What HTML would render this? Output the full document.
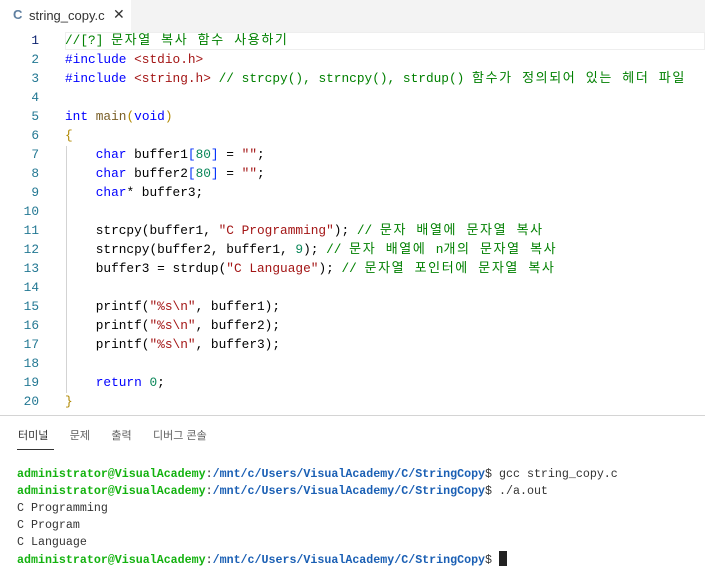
<!DOCTYPE html>
<html><head><meta charset="utf-8"><style>
body{margin:0;width:705px;height:575px;background:#fff;overflow:hidden;position:relative;font-family:"Liberation Sans","Noto Sans CJK KR",sans-serif}
.tabbar{position:absolute;left:0;top:0;width:705px;height:32px;background:#f3f3f3}
.tab{position:absolute;left:0;top:0;width:131px;height:32px;background:#fff;font-size:13px;color:#333}
.code{position:absolute;left:0;top:31px;font-family:"Liberation Mono","Noto Sans CJK KR",monospace;font-size:12.8px;white-space:pre}
.ln{position:absolute;left:0;width:39px;text-align:right;color:#237893;height:19px;line-height:19px}
.cl{position:absolute;left:65px;height:19px;line-height:19px;color:#000}
.h{font-size:13px;letter-spacing:1.6px}
.c{color:#008000}.k{color:#0000ff}.s{color:#a31515}.n{color:#098658}.f{color:#795e26}.b{color:#b08800}.p{color:#0431fa}
.term{position:absolute;left:17px;top:466px;font-family:"Liberation Mono","Noto Sans CJK KR",monospace;font-size:11.65px;white-space:pre;line-height:17px;color:#333}
.g{color:#13b20f;font-weight:bold}.bl{color:#1a5fb4;font-weight:bold}
</style></head><body>
<div class="tabbar"><div class="tab"><span style="position:absolute;left:13px;top:7px;color:#5f7fa0;font-weight:bold">C</span><span style="position:absolute;left:29px;top:8px">string_copy.c</span><span style="position:absolute;left:113px;top:6px;font-size:14px">✕</span></div></div>
<div style="position:absolute;left:65px;top:32px;width:640px;height:18px;border:1px solid #eee;box-sizing:border-box"></div>
<div style="position:absolute;left:66px;top:146px;width:1px;height:247px;background:#d3d3d3"></div>
<div class="code">
<div class="ln" style="top:0;color:#0b216f">1</div><div class="cl" style="top:0"><span class="c">//[?] <span class="h">문자열 복사 함수 사용하기</span></span></div>
<div class="ln" style="top:19px">2</div><div class="cl" style="top:19px"><span class="k">#include</span> <span class="s">&lt;stdio.h&gt;</span></div>
<div class="ln" style="top:38px">3</div><div class="cl" style="top:38px"><span class="k">#include</span> <span class="s">&lt;string.h&gt;</span> <span class="c">// strcpy(), strncpy(), strdup() <span class="h">함수가 정의되어 있는 헤더 파일</span></span></div>
<div class="ln" style="top:57px">4</div>
<div class="ln" style="top:76px">5</div><div class="cl" style="top:76px"><span class="k">int</span> <span class="f">main</span><span class="b">(</span><span class="k">void</span><span class="b">)</span></div>
<div class="ln" style="top:95px">6</div><div class="cl" style="top:95px"><span class="b">{</span></div>
<div class="ln" style="top:114px">7</div><div class="cl" style="top:114px">    <span class="k">char</span> buffer1<span class="p">[</span><span class="n">80</span><span class="p">]</span> = <span class="s">""</span>;</div>
<div class="ln" style="top:133px">8</div><div class="cl" style="top:133px">    <span class="k">char</span> buffer2<span class="p">[</span><span class="n">80</span><span class="p">]</span> = <span class="s">""</span>;</div>
<div class="ln" style="top:152px">9</div><div class="cl" style="top:152px">    <span class="k">char</span>* buffer3;</div>
<div class="ln" style="top:171px">10</div>
<div class="ln" style="top:190px">11</div><div class="cl" style="top:190px">    strcpy(buffer1, <span class="s">"C Programming"</span>); <span class="c">// <span class="h">문자 배열에 문자열 복사</span></span></div>
<div class="ln" style="top:209px">12</div><div class="cl" style="top:209px">    strncpy(buffer2, buffer1, <span class="n">9</span>); <span class="c">// <span class="h">문자 배열에 </span>n<span class="h">개의 문자열 복사</span></span></div>
<div class="ln" style="top:228px">13</div><div class="cl" style="top:228px">    buffer3 = strdup(<span class="s">"C Language"</span>); <span class="c">// <span class="h">문자열 포인터에 문자열 복사</span></span></div>
<div class="ln" style="top:247px">14</div>
<div class="ln" style="top:266px">15</div><div class="cl" style="top:266px">    printf(<span class="s">"%s\n"</span>, buffer1);</div>
<div class="ln" style="top:285px">16</div><div class="cl" style="top:285px">    printf(<span class="s">"%s\n"</span>, buffer2);</div>
<div class="ln" style="top:304px">17</div><div class="cl" style="top:304px">    printf(<span class="s">"%s\n"</span>, buffer3);</div>
<div class="ln" style="top:323px">18</div>
<div class="ln" style="top:342px">19</div><div class="cl" style="top:342px">    <span class="k">return</span> <span class="n">0</span>;</div>
<div class="ln" style="top:361px">20</div><div class="cl" style="top:361px"><span class="b">}</span></div>
</div>
<div style="position:absolute;left:0;top:415px;width:705px;height:1px;background:#d4d4d4"></div>
<div style="position:absolute;left:18px;top:427px;font-size:11px;color:#616161;white-space:pre"><span style="color:#333">터미널</span>       문제       출력       디버그 콘솔</div>
<div style="position:absolute;left:17px;top:449px;width:37px;height:1px;background:#333"></div>
<div class="term"><span class="g">administrator@VisualAcademy</span>:<span class="bl">/mnt/c/Users/VisualAcademy/C/StringCopy</span>$ gcc string_copy.c
<span class="g">administrator@VisualAcademy</span>:<span class="bl">/mnt/c/Users/VisualAcademy/C/StringCopy</span>$ ./a.out
C Programming
C Program
C Language
<span class="g">administrator@VisualAcademy</span>:<span class="bl">/mnt/c/Users/VisualAcademy/C/StringCopy</span>$ <span style="display:inline-block;width:8px;height:15px;background:#222;vertical-align:-3px"></span></div>
</body></html>
